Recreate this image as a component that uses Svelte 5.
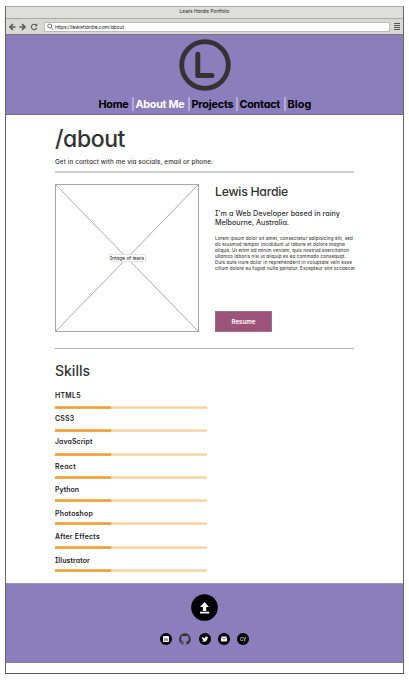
<script>
  const links = [
    { label: 'Home', width: 34, text: 30 },
    { label: 'About Me', width: 56, text: 49, active: true },
    { label: 'Projects', width: 48, text: 42 },
    { label: 'Contact', width: 48, text: 40.5 },
    { label: 'Blog', width: 30, text: 24 }
  ];
  const skills = [
    { name: 'HTML5', width: 26, line: 14 },
    { name: 'CSS3', width: 19.5, line: 11 },
    { name: 'JavaScript', width: 37.5, line: 12 },
    { name: 'React', width: 21, line: 13 },
    { name: 'Python', width: 24, line: 14 },
    { name: 'Photoshop', width: 38, line: 15 },
    { name: 'After Effects', width: 45, line: 15 },
    { name: 'Illustrator', width: 35, line: 16 }
  ];
  const bio = [
    ['Lorem ipsum dolor sit amet, consectetur adipisicing elit, sed', 138],
    ['do eiusmod tempor incididunt ut labore et dolore magna', 130],
    ['aliqua. Ut enim ad minim veniam, quis nostrud exercitation', 134],
    ['ullamco laboris nisi ut aliquip ex ea commodo consequat.', 131],
    ['Duis aute irure dolor in reprehenderit in voluptate velit esse', 137],
    ['cillum dolore eu fugiat nulla pariatur. Excepteur sint occaecat', 140]
  ];

  // Spreads a line's letters so that it fills the measure given in pixels.
  function measure(node, width) {
    const natural = node.getBoundingClientRect().width;
    node.style.letterSpacing = `${(width - natural) / node.textContent.length}px`;
  }
</script>

<div class="window">
  <div class="titlebar"><span use:measure={50}>Lewis Hardie Portfolio</span></div>
  <div class="toolbar">
    <svg class="controls" width="30" height="10" viewBox="0 0 30 10" fill="none" stroke="#5c5c5c">
      <path d="M6.5 5H1.5M4 2L1 5L4 8" stroke-width="1.7" />
      <path d="M10.500 5h5M13 2l3 3l-3 3" stroke-width="1.7" />
      <path d="M27.300 3.300A2.700 2.700 0 1 0 27.700 5.800" stroke-width="1.1" />
      <path d="M28.300 1.500v2.700h-2.700z" fill="#5c5c5c" stroke="none" />
    </svg>
    <div class="address">
      <svg width="7" height="8" viewBox="0 0 7 8" fill="none" stroke="#555" stroke-width=".8"><circle cx="2.700" cy="3" r="2" /><path d="M4.200 4.500L6.500 7" /></svg>
      <span use:measure={69}>https://lewishardie.com/about</span>
    </div>
    <svg class="menu" width="6" height="8" viewBox="0 0 6 8"><path d="M0 .5h6M0 2.500h6M0 4.500h6M0 6.500h6" stroke="#555" stroke-width="1" /></svg>
  </div>

  <header>
    <svg class="logo" width="52" height="52" viewBox="0 0 52 52" fill="none" stroke="#333">
      <circle cx="26" cy="26" r="23.300" stroke-width="4.800" />
      <path d="M18.800 15.200V36.500H33" stroke-width="5" stroke-linecap="round" stroke-linejoin="round" />
    </svg>
    <nav>
      {#each links as link}
        <a class:active={link.active} style:width="{link.width}px" href="#top"><span use:measure={link.text}>{link.label}</span></a>
      {/each}
    </nav>
  </header>

  <main>
    <h1><span use:measure={70}>/about</span></h1>
    <p class="intro"><span use:measure={158}>Get in contact with me via socials, email or phone.</span></p>
    <hr />
    <section class="profile">
      <div class="picture">
        <svg width="144" height="148" viewBox="0 0 144 148" fill="none" stroke="#aaa">
          <rect x=".5" y=".5" width="143" height="147" stroke="#a6a6a6" /><path d="M1 1L143 147M143 1L1 147" />
        </svg>
        <span class="caption"><span use:measure={34}>Image of lewis</span></span>
      </div>
      <div class="details">
        <h2><span use:measure={73}>Lewis Hardie</span></h2>
        <p class="role"><span use:measure={125}>I'm a Web Developer based in rainy</span><br /><span use:measure={74}>Melbourne, Australia.</span></p>
        <p class="bio">{#each bio as [line, width]}<span use:measure={width}>{line}</span><br />{/each}</p>
        <button><span use:measure={24}>Resume</span></button>
      </div>
    </section>
    <hr class="thin" />
    <h2 class="skills-title"><span use:measure={35}>Skills</span></h2>
    <ul>
      {#each skills as skill}
        <li><span style:line-height="{skill.line}px" use:measure={skill.width}>{skill.name}</span><div class="bar"><div></div></div></li>
      {/each}
    </ul>
  </main>

  <footer>
    <svg class="top" width="27" height="27" viewBox="0 0 27 27"><circle cx="13.500" cy="13.500" r="13.300" /><path d="M13.500 8L18 13h-2.800v4h-3.400v-4H9zM9 17.800h9.200v1.600H9z" fill="#fff" /></svg>
    <div class="social">
      <svg viewBox="0 0 12 12"><circle cx="6" cy="6" r="6" /><rect x="3" y="3" width="6" height="6" rx=".7" fill="#fff" /><path d="M4.300 5.200V8M5.900 8V5.200M5.900 6.500Q7.600 4.500 7.600 8M4 4.100h.7" fill="none" stroke="#222" stroke-width=".6" /></svg>
      <svg viewBox="0 0 16 16"><path fill="#333" d="M8 .3a8 8 0 0 0-2.500 15.500c.4.1.5-.2.500-.4v-1.500c-2.200.5-2.700-1-2.700-1-.4-.9-.9-1.200-.9-1.200-.7-.5.1-.5.1-.5.8.1 1.200.8 1.200.8.700 1.300 1.900.9 2.400.7.100-.5.300-.9.500-1.100-1.800-.2-3.700-.9-3.700-4 0-.9.300-1.600.8-2.100-.1-.2-.4-1 .1-2.100 0 0 .7-.2 2.200.8a8 8 0 0 1 4 0c1.500-1 2.200-.8 2.200-.8.5 1.100.2 1.900.1 2.100.5.500.8 1.200.8 2.100 0 3.100-1.900 3.800-3.700 4 .3.300.6.800.6 1.500v2.200c0 .2.100.5.600.4A8 8 0 0 0 8 .3" /></svg>
      <svg viewBox="0 0 12 12"><circle cx="6" cy="6" r="6" /><path fill="#fff" transform="translate(2.800 2.900) scale(.27)" d="M24 4.600a10 10 0 0 1-2.800.8 5 5 0 0 0 2.100-2.700c-1 .6-2 1-3.100 1.200a4.900 4.900 0 0 0-8.400 4.500A14 14 0 0 1 1.700 3.100a4.900 4.900 0 0 0 1.500 6.600 5 5 0 0 1-2.200-.6 5 5 0 0 0 3.900 4.900 5 5 0 0 1-2.200.1 4.900 4.900 0 0 0 4.600 3.400A10 10 0 0 1 0 19.500 14 14 0 0 0 21.500 7.100 10 10 0 0 0 24 4.600" /></svg>
      <svg viewBox="0 0 12 12"><circle cx="6" cy="6" r="6" /><rect x="2.900" y="3.500" width="6.200" height="5" rx=".4" fill="#fff" /><path d="M3 4l3 2.300L9 4" fill="none" stroke="#222" stroke-width=".6" /></svg>
      <svg viewBox="0 0 12 12"><circle cx="6" cy="6" r="6" /><text x="6" y="7.500" text-anchor="middle" font-size="4.200" font-weight="600" fill="#ddd">CV</text></svg>
    </div>
  </footer>
</div>

<style>
  :global(body) { background: #fff; }
  .window { box-sizing: border-box; width: 399px; height: 668px; margin: 6px 0 0 5px; border: 1px solid #666; border-top-color: #aaa; border-bottom-color: #555; font-family: Inter, "Liberation Sans", sans-serif; font-feature-settings: "cv11", "cv08"; color: #333; background: #fff; }
  span { white-space: nowrap; }
  .titlebar { height: 11px; background: #dededc; border-bottom: 1px solid #aaa; text-align: center; font-size: 4.8px; line-height: 8px; color: #222; }
  .toolbar { box-sizing: border-box; height: 16px; background: #d8d8d7; border-bottom: 1px solid #777; display: flex; align-items: center; padding: 0 3px 0 3px; }
  .controls { margin-right: 5px; flex: none; }
  .address { flex: 1; box-sizing: border-box; height: 10px; background: #fff; border: 1px solid #bbb; display: flex; align-items: center; gap: 1px; padding-left: 2px; font-size: 5px; line-height: 8px; color: #222; }
  .menu { margin-left: 4px; }
  header { box-sizing: border-box; height: 80px; background: #8a7ebd; border-bottom: 1px solid #766ca0; display: flex; flex-direction: column; align-items: center; padding-top: 4px; }
  .logo { display: block; height: 52px; }
  nav { display: flex; margin-top: 6px; padding-left: 2px; }
  nav a { box-sizing: border-box; height: 14px; line-height: 15px; font-size: 10.800px; font-weight: 700; color: #000; text-decoration: none; padding-left: 2px; border-left: 2px solid #b5acd6; }
  nav a:first-child { border: 0; padding-left: 1px; }
  nav a.active { color: #fff; }
  main { box-sizing: border-box; height: 468px; padding: 11px 49px 0; }
  h1, h2, p, ul { margin: 0; padding: 0; font-weight: 400; }
  h1 { height: 27px; font-size: 23px; line-height: 26px; font-weight: 500; }
  .intro { height: 18px; font-size: 6.300px; line-height: 18px; font-weight: 500; }
  hr { box-sizing: border-box; width: 299px; height: 2px; margin: 0; border: 0; background: #d2d2d2; }
  .profile { display: flex; gap: 16px; margin-top: 11px; height: 148px; }
  .picture { display: grid; place-items: center; width: 144px; }
  .picture > * { grid-area: 1 / 1; }
  .caption { z-index: 1; box-sizing: border-box; width: 37px; height: 8px; border: 1px solid #e4e4e4; border-radius: 1px; background: #fff; font-size: 4.900px; line-height: 6px; text-align: center; color: #222; }
  .details { display: flex; flex-direction: column; align-items: flex-start; }
  h2 { font-size: 12.300px; line-height: 16px; font-weight: 450; }
  .role { margin-top: 9px; font-size: 7.200px; line-height: 9.400px; font-weight: 500; }
  .bio { margin-top: 8px; font-size: 4.500px; line-height: 6px; font-weight: 500; color: #444; }
  button { margin-top: auto; box-sizing: border-box; width: 57px; height: 21px; padding: 0; border: 1px solid #8d7488; background: #9e5379; color: #fff; font: 600 6.200px/19px Inter, "Liberation Sans", sans-serif; font-feature-settings: inherit; }
  .thin { height: 1px; margin-top: 16px; background: #b2b2b2; }
  .skills-title { margin-top: 12px; height: 20px; font-size: 14px; line-height: 20px; font-weight: 450; }
  ul { list-style: none; margin-top: 8px; font-size: 6.900px; font-weight: 600; color: #222; }
  li { box-sizing: border-box; display: flex; flex-direction: column; align-items: flex-start; height: 23.300px; padding-top: 4px; }
  li:first-child { height: 20px; padding-top: 0; }
  .bar { width: 152px; height: 3px; margin-top: auto; background: linear-gradient(#fce1bd 1px, #fbd2a0 1px 2px, #fbdcb2 2px); }
  .bar div { width: 56px; height: 100%; background: linear-gradient(#f5b45f 1px, #f19f30 1px 2px, #f3ab4d 2px); }
  footer { box-sizing: border-box; height: 80px; background: #8a7ebd; border-top: 1px solid #9d95bd; border-bottom: 1px solid #8178a5; display: flex; flex-direction: column; align-items: center; padding-top: 10px; }
  .top { display: block; }
  .social { display: flex; gap: 7.200px; margin-top: 12px; }
  .social svg { width: 12px; height: 12px; }
</style>
